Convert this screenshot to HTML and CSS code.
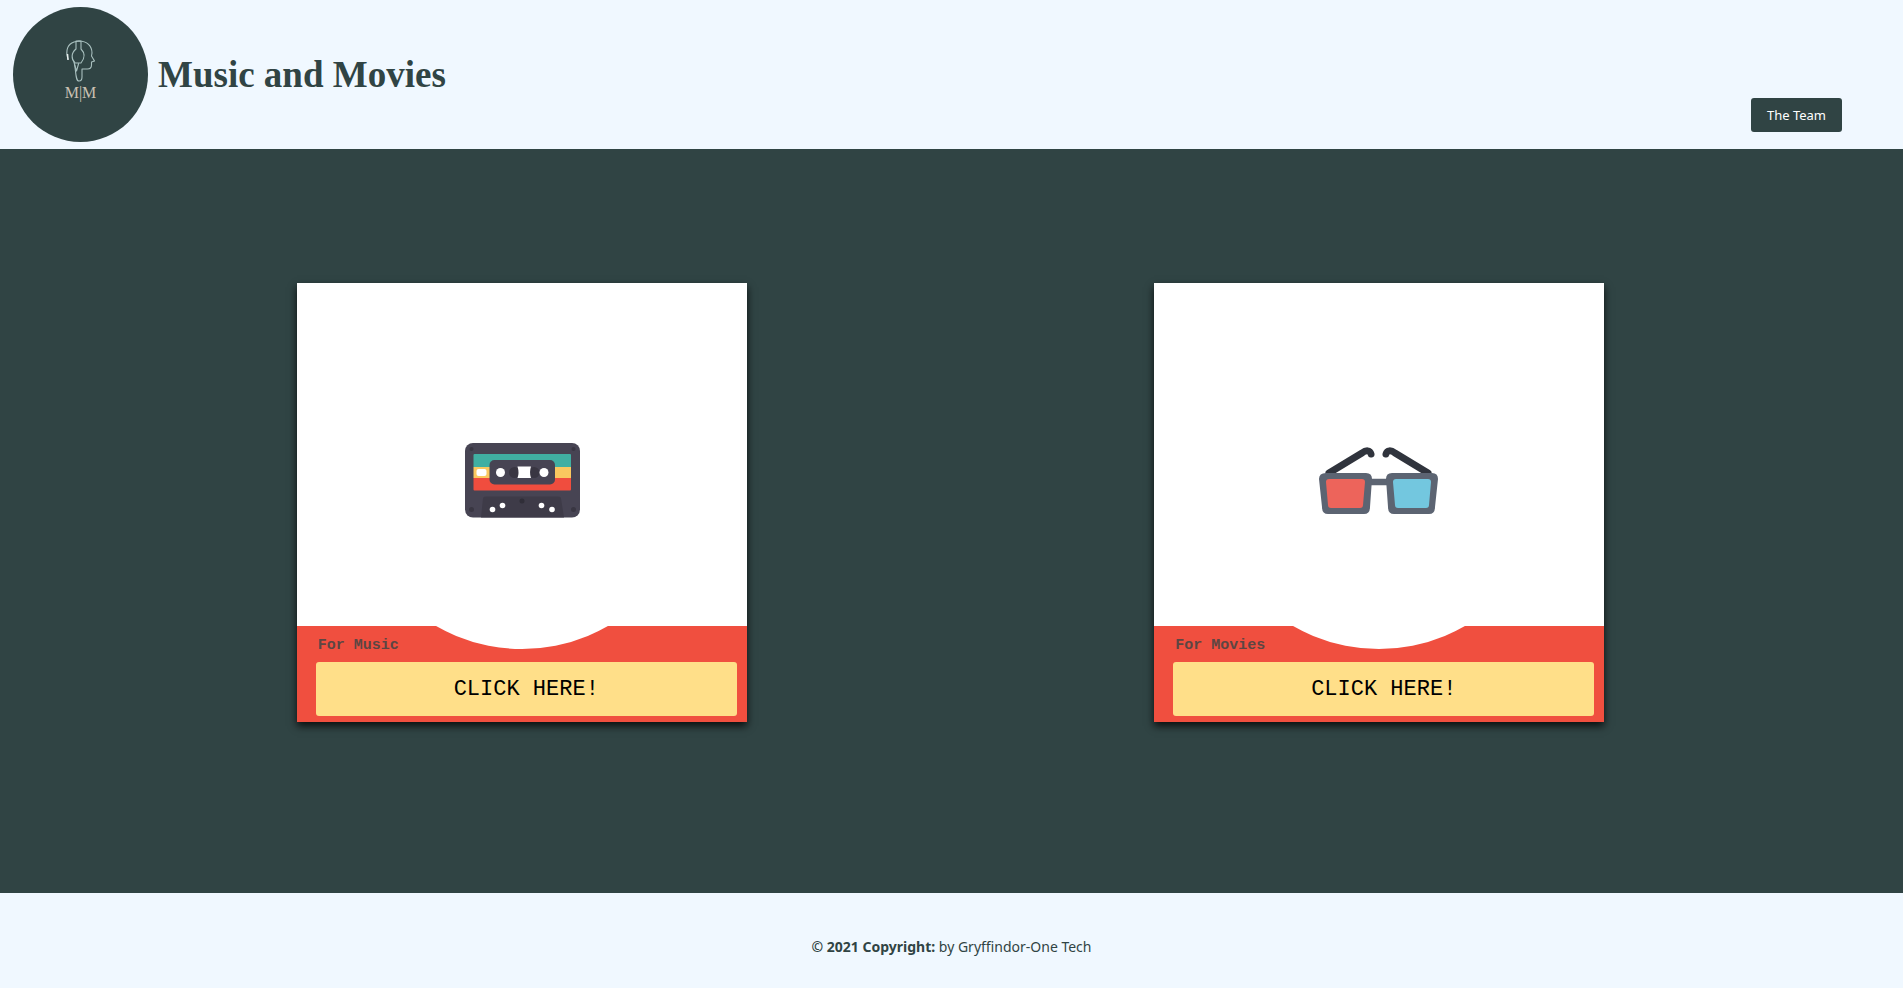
FILE: index.html
```
<!DOCTYPE html>
<html lang="en">
<head>
<meta charset="utf-8">
<meta name="viewport" content="width=device-width, initial-scale=1">
<title>Music and Movies</title>
<link rel="stylesheet" href="styles.css">
</head>
<body>
<header class="site-header">
  <div class="brand">
    <svg class="logo" viewBox="0 0 135 135" role="img" aria-label="M|M logo">
      <circle cx="67.5" cy="67.5" r="67.5" fill="#304444"/>
      <g fill="none" stroke="#a9c0bf" stroke-width="1.1" stroke-linejoin="round" stroke-linecap="round">
        <path d="M55 52C52 43 55 37 61 35l5-1c8 0 13 5 13 12l-.5 3 3 5-3 1v3c0 3-2 4-4 4H69v8c0 3-1 4-3 4-3 0-3-6-4-14l-1-5"/>
        <path d="M63 34v8c-5 4-5 10-1 14h6c4-5 4-10 0-14v-8zM61.500 57l2 7 2-7"/>
      </g>
      <path d="M54.500 47l.5 6" stroke="#e8f0ef" stroke-width="1.500"/>
      <text x="67.500" y="91" text-anchor="middle" class="logo-text">M|M</text>
    </svg>
    <h1 class="site-title">Music and Movies</h1>
  </div>
  <button class="team-button" type="button">The Team</button>
</header>
<main class="choices">
  <article class="card">
    <div class="card-picture">
      <svg class="art" viewBox="2 0 140 100" role="img" aria-label="Cassette tape">
        <rect x="15" y="13" width="115" height="74.500" rx="8" fill="#474453"/>
        <g fill="#393642"><circle cx="21.500" cy="19" r="2"/><circle cx="123.500" cy="19" r="2"/><circle cx="21.500" cy="79.500" r="2.500"/><circle cx="123.500" cy="79.500" r="2.500"/>
        <path d="M31 87.500l2-19q0-2 3-2h72q3 0 3 2l3 19z" fill="#3e3b48"/></g>
        <path d="M23.500 37V25q0-1 1-1H120q1 0 1 1v12z" fill="#40afa2"/>
        <path d="M23.500 37H121v11H23.500z" fill="#fac85f"/>
        <path d="M23.500 48H121v11.500q0 1-1 1H24.500q-1 0-1-1z" fill="#f04d3e"/>
        <rect x="26.500" y="39" width="10" height="7" rx="2" fill="#fff"/>
        <rect x="39.500" y="30" width="65.500" height="24.500" rx="5" fill="#474453"/>
        <circle cx="64.500" cy="42.500" r="5.500" fill="#393642"/>
        <circle cx="84" cy="42.500" r="5.500" fill="#393642"/>
        <path d="M67.500 36.500H81q-2 6 0 11.500H67.500q2-5 0-11.500z" fill="#fff"/>
        <g fill="#fff"><circle cx="50.500" cy="42.500" r="4.500"/><circle cx="94" cy="42.500" r="4.500"/><circle cx="42.500" cy="79.500" r="2.800"/><circle cx="52.500" cy="75.500" r="2.800"/><circle cx="91.500" cy="75.500" r="2.800"/><circle cx="102" cy="79.500" r="2.800"/></g>
        <circle cx="72" cy="71" r="2.500" fill="#302e38"/>
      </svg>
    </div>
    <div class="card-body">
      <h2 class="card-title">For Music</h2>
      <button class="card-button" type="button">CLICK HERE!</button>
    </div>
  </article>
  <article class="card">
    <div class="card-picture">
      <svg class="art" viewBox="-1 0 150 100" role="img" aria-label="3D glasses">
        <g fill="none" stroke="#30343d" stroke-width="7" stroke-linecap="round" stroke-linejoin="round">
          <path d="M24 43l33-20c4-3 8-3 9 1M123 43L90 23c-4-3-8-3-9 1"/>
        </g>
        <path d="M63 52h22" stroke="#5c6472" stroke-width="6.500"/>
        <g fill="#5c6472">
          <path d="M21 43h40q6 0 6 6l-2 28q0 7-6 7H23q-6 0-6-7l-3-28q0-6 7-6z"/>
          <path d="M87 43h40q6 0 6 6l-3 28q0 7-6 7H89q-6 0-6-7l-2-28q0-6 6-6z"/>
        </g>
        <path d="M24 49h33q3 0 3 3l-2 23q0 3-3 3H26q-3 0-3-3l-2-23q0-3 3-3z" fill="#ed645b"/>
        <path d="M91 49h32q3 0 3 3l-2 23q0 3-3 3H93q-3 0-3-3l-2-23q0-3 3-3z" fill="#73c7df"/>
      </svg>
    </div>
    <div class="card-body">
      <h2 class="card-title">For Movies</h2>
      <button class="card-button" type="button">CLICK HERE!</button>
    </div>
  </article>
</main>
<footer class="site-footer">
  <p><strong>© 2021 Copyright:</strong> by Gryffindor-One Tech</p>
</footer>
</body>
</html>
```
FILE: styles.css
```
* { box-sizing: border-box; }
body {
  margin: 0;
  min-height: 100vh;
  display: flex;
  flex-direction: column;
  background: #f0f8ff;
  color: #304444;
  font-family: "Noto Sans", "Open Sans", sans-serif;
  font-size: 14px;
}
.site-header {
  display: flex;
  justify-content: space-between;
  align-items: flex-end;
  padding: 7px 61px 7px 13px;
}
.brand { display: flex; align-items: center; gap: 10px; }
.logo { width: 135px; height: 135px; display: block; }
.logo-text { font: 16px "Liberation Serif", serif; fill: #c9c1b2; }
.site-title {
  margin: 0;
  font: bold 37px/48px "Liberation Serif", serif;
}
.team-button {
  height: 34px;
  margin-bottom: 10px;
  padding: 0 16px;
  border: 0;
  border-radius: 3px;
  background: #304444;
  color: #fff;
  font: inherit;
  font-size: 13px;
}
.choices {
  flex: 1;
  display: grid;
  grid-template-columns: 1fr 1fr;
  justify-items: center;
  align-items: start;
  padding: 134px 95px 171px 93px;
  background: #304444;
}
.card {
  width: 100%;
  max-width: 450px;
  background: #f04f3f;
  box-shadow: 0 4px 8px rgba(0, 0, 0, 0.8);
}
.card-picture {
  display: flex;
  justify-content: center;
  align-items: flex-start;
  padding: 147px 0 96px;
  background: #fff;
}
.art { height: 100px; }
.card-body {
  position: relative;
  overflow: hidden;
  padding: 10px 10px 6px 19px;
}
.card-body::before {
  content: "";
  position: absolute;
  top: -321px;
  left: calc(50% - 172px);
  width: 344px;
  height: 344px;
  border-radius: 50%;
  background: #fff;
}
.card-title {
  margin: 0 0 6px 2px;
  font: bold 15px/20px "Liberation Mono", monospace;
  color: #5c4643;
}
.card-button {
  width: 100%;
  height: 54px;
  border: 0;
  border-radius: 3px;
  background: #ffdf89;
  color: #000;
  font: 22px "Liberation Mono", monospace;
}
.site-footer { padding: 44px 20px 31px; text-align: center; }
.site-footer p { margin: 0; line-height: 20px; }
```
